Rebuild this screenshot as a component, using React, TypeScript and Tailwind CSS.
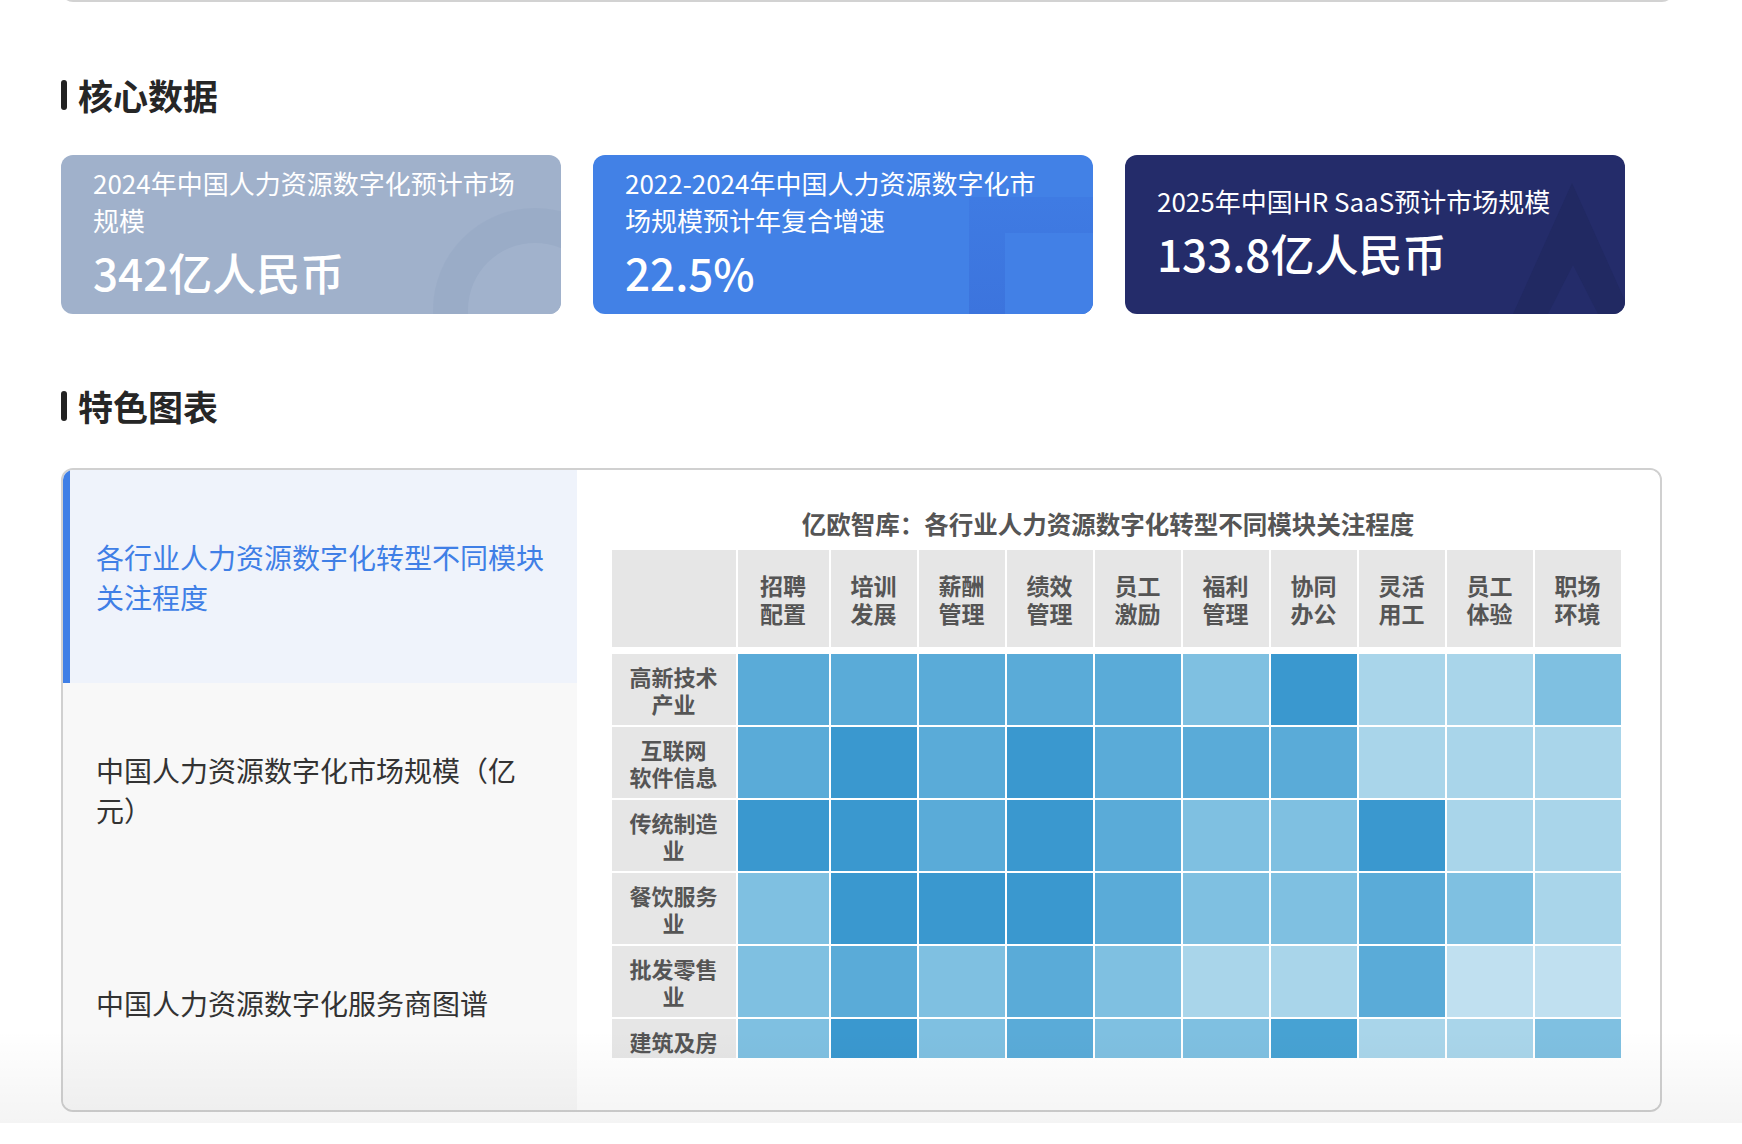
import React from "react";

const FONT = { fontFamily: '"Noto Sans CJK SC", "Noto Sans", sans-serif' };

type Lv = "D" | "M" | "L" | "LL" | "XL" | "D2";
const cellCls: Record<Lv, string> = {
  D: "bg-[#3a98cf]",
  M: "bg-[#5aabd8]",
  L: "bg-[#7fc0e1]",
  LL: "bg-[#a9d5ea]",
  XL: "bg-[#c0e0f0]",
  D2: "bg-[#47a2d3]",
};

const cols = [
  ["招聘", "配置"],
  ["培训", "发展"],
  ["薪酬", "管理"],
  ["绩效", "管理"],
  ["员工", "激励"],
  ["福利", "管理"],
  ["协同", "办公"],
  ["灵活", "用工"],
  ["员工", "体验"],
  ["职场", "环境"],
];

const rows: { label: string[]; v: Lv[] }[] = [
  { label: ["高新技术", "产业"], v: ["M", "M", "M", "M", "M", "L", "D", "LL", "LL", "L"] },
  { label: ["互联网", "软件信息"], v: ["M", "D", "M", "D", "M", "M", "M", "LL", "LL", "LL"] },
  { label: ["传统制造", "业"], v: ["D", "D", "M", "D", "M", "L", "L", "D", "LL", "LL"] },
  { label: ["餐饮服务", "业"], v: ["L", "D", "D", "D", "M", "L", "L", "M", "L", "LL"] },
  { label: ["批发零售", "业"], v: ["L", "M", "L", "M", "L", "LL", "LL", "M", "XL", "XL"] },
  { label: ["建筑及房", "地产"], v: ["L", "D", "L", "M", "L", "L", "D2", "LL", "LL", "L"] },
];

function Heading({ children }: { children: React.ReactNode }) {
  return (
    <div className="flex items-center h-[44px]">
      <div className="w-[6px] h-[30px] rounded-[3px] bg-[#222]" />
      <div className="ml-[11px] text-[35px] leading-[44px] font-bold text-[#262626]">{children}</div>
    </div>
  );
}

function Card({
  bg,
  title,
  value,
  deco,
}: {
  bg: string;
  title: string;
  value: string;
  deco: React.ReactNode;
}) {
  return (
    <div className={`relative w-[500px] h-[159px] rounded-[12px] overflow-hidden ${bg}`}>
      {deco}
      <div className="relative h-full flex flex-col justify-center pl-[32px] pr-[32px] pb-[9px] text-white">
        <div className="text-[26px] leading-[37px]">{title}</div>
        <div className="mt-[9px] text-[44px] leading-[50px] font-medium">{value}</div>
      </div>
    </div>
  );
}

export default function App() {
  return (
    <div className="relative w-[1742px] h-[1144px] overflow-hidden bg-white" style={FONT}>
      <div className="pl-[61px]">
        <div className="w-[1613px] h-[20px] -mt-[18px] border-2 border-t-0 border-[#d2d2d2] rounded-b-[12px]" />

        <div className="mt-[71px]">
          <Heading>核心数据</Heading>
        </div>

        <div className="mt-[38px] flex gap-[32px]">
          <Card
            bg="bg-[#a0b1cb]"
            title="2024年中国人力资源数字化预计市场规模"
            value="342亿人民币"
            deco={
              <svg className="absolute inset-0" width="500" height="159">
                <circle cx="474" cy="155" r="102" fill="#8fa2bf" fillOpacity="0.3" />
                <circle cx="474" cy="155" r="67" fill="#a1b2cc" />
              </svg>
            }
          />
          <Card
            bg="bg-[#4281e6]"
            title="2022-2024年中国人力资源数字化市场规模预计年复合增速"
            value="22.5%"
            deco={
              <svg className="absolute inset-0" width="500" height="159">
                <defs>
                  <linearGradient id="g2" x1="0" y1="0" x2="0" y2="1">
                    <stop offset="0" stopColor="#3f7be3" />
                    <stop offset="1" stopColor="#3c74dd" />
                  </linearGradient>
                </defs>
                <rect x="376" y="42" width="124" height="117" fill="url(#g2)" />
                <rect x="412" y="78" width="88" height="81" fill="#4280e6" />
              </svg>
            }
          />
          <Card
            bg="bg-[#242c6a]"
            title="2025年中国HR SaaS预计市场规模"
            value="133.8亿人民币"
            deco={
              <svg className="absolute inset-0" width="500" height="159">
                <polygon points="447,28 388,159 506,159" fill="#212962" />
                <polygon points="448,110 423,159 473,159" fill="#242c6a" />
              </svg>
            }
          />
        </div>

        <div className="mt-[70px]">
          <Heading>特色图表</Heading>
        </div>

        <div className="mt-[40px] w-[1601px] h-[644px] border-2 border-[#d0d0d0] rounded-[12px] overflow-hidden flex">
          <div className="w-[514px] flex flex-col">
            <div className="flex-1 flex bg-[#eff3fb]">
              <div className="w-[7px] bg-[#3f7fe6]" />
              <div className="flex-1 flex items-center pl-[26px] pr-[24px] text-[28px] leading-[40px] text-[#3f7fe6]">
                各行业人力资源数字化转型不同模块关注程度
              </div>
            </div>
            <div className="flex-1 flex items-center bg-[#f8f8f8] pl-[33px] pr-[24px] text-[28px] leading-[40px] text-[#333]">
              中国人力资源数字化市场规模（亿元）
            </div>
            <div className="flex-1 flex items-center bg-[#f8f8f8] pl-[33px] pr-[24px] text-[28px] leading-[40px] text-[#333]">
              中国人力资源数字化服务商图谱
            </div>
          </div>

          <div className="flex-1 bg-white pt-[30px] pr-[5px] flex justify-center">
            <div className="h-[558px] pt-[8px] overflow-hidden">
              <div className="pr-[16px] text-center text-[24.5px] leading-[32px] font-bold text-[#555]">
                亿欧智库：各行业人力资源数字化转型不同模块关注程度
              </div>
              <div className="mt-[10px] grid grid-cols-[124px_91px_repeat(9,86px)] gap-x-[2px] h-[97px]">
                <div className="bg-[#e6e6e6]" />
                {cols.map((c, i) => (
                  <div
                    key={i}
                    className="bg-[#e6e6e6] flex items-center justify-center text-center text-[23px] leading-[28px] font-bold text-[#555]"
                  >
                    <div>
                      {c[0]}
                      <br />
                      {c[1]}
                    </div>
                  </div>
                ))}
              </div>
              <div className="mt-[7px] grid grid-cols-[124px_91px_repeat(9,86px)] auto-rows-[71px] gap-[2px]">
                {rows.map((r, ri) => (
                  <React.Fragment key={ri}>
                    <div className="bg-[#e6e6e6] flex items-center justify-center text-center text-[22px] leading-[27px] font-bold text-[#555]">
                      <div>
                        {r.label[0]}
                        <br />
                        {r.label[1]}
                      </div>
                    </div>
                    {r.v.map((v, ci) => (
                      <div key={ci} className={cellCls[v]} />
                    ))}
                  </React.Fragment>
                ))}
              </div>
            </div>
          </div>
        </div>
      </div>

      <div className="absolute left-0 right-0 top-[1030px] h-[93px] bg-gradient-to-b from-transparent to-[rgba(0,0,0,0.045)] pointer-events-none" />
      <div className="absolute left-0 right-0 bottom-0 h-[21px] bg-white" />
    </div>
  );
}
